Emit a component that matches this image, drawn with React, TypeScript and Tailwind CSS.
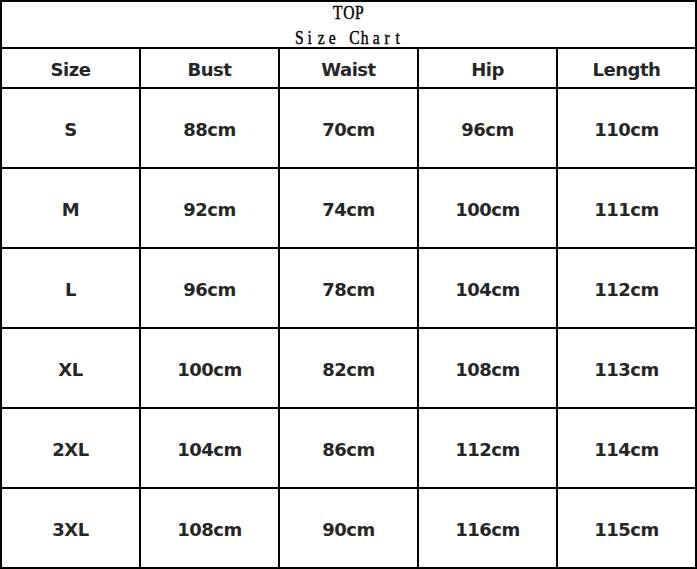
import React from "react";

const headers = ["Size", "Bust", "Waist", "Hip", "Length"];
const rows = [
  ["S", "88cm", "70cm", "96cm", "110cm"],
  ["M", "92cm", "74cm", "100cm", "111cm"],
  ["L", "96cm", "78cm", "104cm", "112cm"],
  ["XL", "100cm", "82cm", "108cm", "113cm"],
  ["2XL", "104cm", "86cm", "112cm", "114cm"],
  ["3XL", "108cm", "90cm", "116cm", "115cm"],
];

function MonoLine({ text }: { text: string }) {
  return (
    <div className="flex">
      {text.split("").map((ch, i) => (
        <span key={i} className="flex w-[11px] justify-center">
          <span className="inline-block scale-x-[0.82]">
            {ch === " " ? "\u00a0" : ch}
          </span>
        </span>
      ))}
    </div>
  );
}

export default function App() {
  return (
    <div className="w-[697px] h-[569px] bg-white">
      <div className="w-[697px] h-[569px] border-l-2 border-t-2 border-black grid grid-cols-[139px_139px_139px_139px_139px] grid-rows-[47px_40px_80px_80px_80px_80px_80px_80px]">
        <div className="col-span-5 border-r-2 border-b-2 border-black flex flex-col items-center justify-center text-black text-[19px] leading-[25px] [font-family:'Liberation_Serif',serif] [-webkit-text-stroke:0.4px_black] pt-[1px]">
          <MonoLine text="TOP" />
          <MonoLine text="Size Chart" />
        </div>
        {headers.map((h) => (
          <div
            key={h}
            className="border-r-2 border-b-2 border-black flex items-center justify-center pt-[2px] text-[18px] font-bold tracking-[-0.5px] text-[#262626] [font-family:'DejaVu_Sans',sans-serif]"
          >
            {h}
          </div>
        ))}
        {rows.map((r, i) =>
          r.map((c, j) => (
            <div
              key={`${i}-${j}`}
              className="border-r-2 border-b-2 border-black flex items-center justify-center pt-[2px] text-[18px] font-bold tracking-[-0.5px] text-[#262626] [font-family:'DejaVu_Sans',sans-serif]"
            >
              {c}
            </div>
          ))
        )}
      </div>
    </div>
  );
}
